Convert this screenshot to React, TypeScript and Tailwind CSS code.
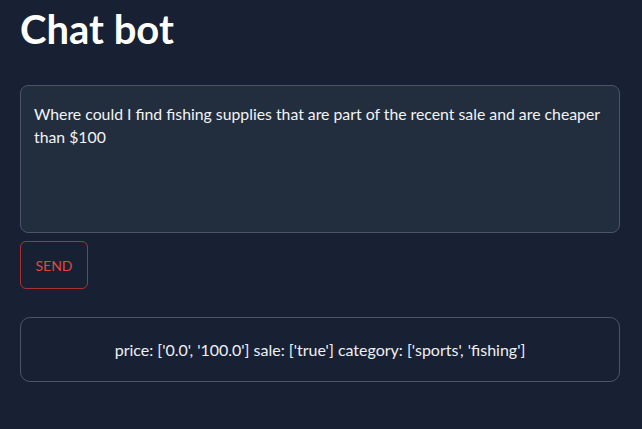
import React from "react";

export default function App() {
  return (
    <div
      className="min-h-screen w-full bg-[#182133] px-5 pt-[5px]"
      style={{ fontFamily: "Lato, 'Noto Sans', sans-serif" }}
    >
      <h1 className="text-[40px] font-bold leading-[48px] text-white">Chat bot</h1>
      <textarea
        className="mt-[32px] block h-[148px] w-[600px] resize-none rounded-lg border border-[#4b5565] bg-[#222d3e] pl-[13px] pr-[4px] pt-[16px] text-[15.8px] leading-[23px] text-[#f3f4f6] outline-none"
        defaultValue="Where could I find fishing supplies that are part of the recent sale and are cheaper than $100"
      />
      <button className="mt-[8px] flex h-[48px] w-[68px] items-center justify-center rounded-md border border-[#a8322f] text-[14px] text-[#e5463c]">
        SEND
      </button>
      <div className="mt-[28px] flex h-[65px] w-[600px] items-center justify-center rounded-[10px] border border-[#4b5565] text-[16px] text-[#eef0f3]">
        price: ['0.0', '100.0'] sale: ['true'] category: ['sports', 'fishing']
      </div>
    </div>
  );
}
